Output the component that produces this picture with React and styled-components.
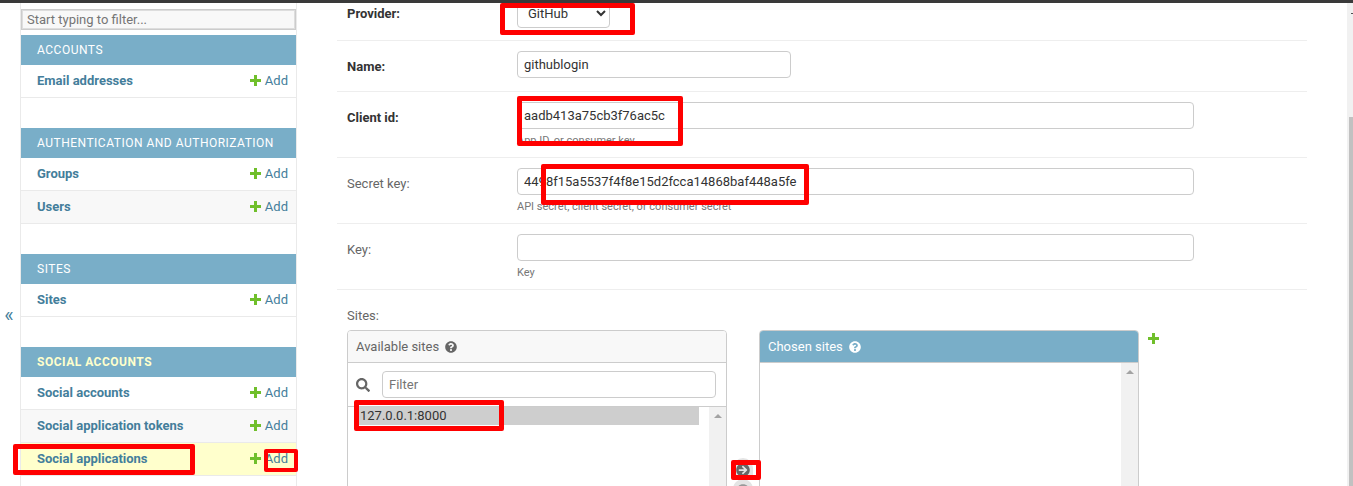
import React from "react";
import styled, { createGlobalStyle } from "styled-components";
import { FaArrowCircleRight, FaQuestionCircle, FaSearch } from "react-icons/fa";

const GlobalStyle = createGlobalStyle`
  html, body {
    margin: 0;
    padding: 0;
    background: #fff;
    overflow: hidden;
  }
  * {
    box-sizing: border-box;
  }
`;

const Page = styled.div`
  position: relative;
  width: 1353px;
  height: 486px;
  overflow: hidden;
  font-family: Roboto, "Liberation Sans", sans-serif;
  font-size: 13px;
  color: #333;
  border-top: 3px solid #3a3a3a;
  display: flex;
`;

const Toggle = styled.div`
  width: 20px;
  flex: none;
  padding: 300px 2px 0 0;
  text-align: center;
  font-size: 20px;
  line-height: 24px;
  color: #447e9b;
`;

const Sidebar = styled.nav`
  width: 277px;
  flex: none;
  padding-top: 6px;
  border-left: 1px solid #eaeaea;
  border-right: 1px solid #eaeaea;
`;

const NavFilter = styled.input`
  display: block;
  width: 100%;
  height: 21px;
  margin-bottom: 5px;
  padding: 0 5px;
  border: 1px solid #ccc;
  box-shadow: inset 0 0 0 1px #ddd;
  background: #f8f8f8;
  font: 13px Roboto, sans-serif;
  &::placeholder {
    color: #757575;
    opacity: 1;
  }
`;

const Group = styled.section`
  margin-bottom: 30px;
`;

const Caption = styled.div`
  height: 30px;
  padding-left: 16px;
  background: #79aec8;
  color: ${(p) => (p.$current ? "#ffc" : "#fff")};
  font-size: 12px;
  font-weight: ${(p) => (p.$current ? 700 : 400)};
  line-height: 30px;
  letter-spacing: 0.5px;
  text-transform: uppercase;
`;

const ModelRow = styled.div`
  height: 33px;
  padding: 0 8px 2px 16px;
  display: flex;
  align-items: center;
  justify-content: space-between;
  border-bottom: 1px solid #eaeaea;
  background: ${(p) => p.$bg || "#fff"};
  color: #447e9b;
`;

const ModelName = styled.span`
  font-weight: 700;
`;

const AddLink = styled.span`
  display: flex;
  align-items: center;
  gap: 4px;
`;

const PlusIcon = styled.svg`
  width: 11px;
  height: 11px;
  fill: #70bf2b;
`;

const Main = styled.main`
  flex: 1;
  padding-left: 40px;
  overflow: hidden;
`;

const Form = styled.div`
  width: 970px;
  margin-top: -15px;
`;

const FormRow = styled.div`
  padding: 10px 10px 13px;
  border-bottom: 1px solid #eee;
  display: flex;
`;

const SitesRow = styled.div`
  padding: 10px 10px 0;
`;

const Label = styled.label`
  display: block;
  width: 170px;
  flex: none;
  padding-top: 8px;
  line-height: 16px;
  color: ${(p) => (p.$required ? "#333" : "#666")};
  font-weight: ${(p) => (p.$required ? 700 : 400)};
`;

const Select = styled.select`
  display: block;
  width: 93px;
  height: 30px;
  margin-bottom: -1px;
  padding: 0 6px;
  border: 1px solid #ccc;
  border-radius: 4px;
  background: #fff;
  color: #333;
  font: 13px Roboto, sans-serif;
`;

const TextInput = styled.input`
  display: block;
  width: ${(p) => p.$width}px;
  height: 27px;
  padding: 0 6px;
  border: 1px solid #ccc;
  border-radius: 4px;
  background: #fff;
  color: #333;
  font: 13px Roboto, sans-serif;
`;

const Help = styled.div`
  margin: 5px 0 -3px;
  font-size: 11px;
  line-height: 13px;
  color: #777;
`;

const SelectorWrap = styled.div`
  display: flex;
  align-items: flex-start;
  margin-top: 6px;
`;

const Box = styled.div`
  width: 380px;
  height: 300px;
  flex: none;
  border: 1px solid #ccc;
  border-radius: 4px 4px 0 0;
  overflow: hidden;
`;

const BoxTitle = styled.div`
  height: 32px;
  padding-left: 8px;
  display: flex;
  align-items: center;
  gap: 6px;
  border-bottom: 1px solid #ccc;
  background: ${(p) => (p.$chosen ? "#79aec8" : "#f8f8f8")};
  color: ${(p) => (p.$chosen ? "#fff" : "#666")};
  svg {
    width: 12px;
    height: 12px;
  }
`;

const FilterRow = styled.div`
  height: 44px;
  padding: 8px 10px 0 8px;
  display: flex;
  gap: 12px;
  border-bottom: 1px solid #ccc;
  color: #666;
  svg {
    width: 14px;
    height: 14px;
    margin-top: 7px;
    flex: none;
  }
`;

const FilterInput = styled.input`
  flex: 1;
  min-width: 0;
  height: 27px;
  padding: 0 6px;
  border: 1px solid #ccc;
  border-radius: 4px;
  font: 13px Roboto, sans-serif;
  &::placeholder {
    color: #757575;
    opacity: 1;
  }
`;

const ListArea = styled.div`
  display: flex;
  height: 100%;
`;

const Options = styled.div`
  flex: 1;
  padding: 0 10px 0 8px;
`;

const Option = styled.div`
  height: 18px;
  padding-left: 4px;
  background: #cecece;
  line-height: 17px;
  color: #333;
`;

const ListTrack = styled.div`
  width: 17px;
  flex: none;
  padding-top: 7px;
  background: #f1f1f1;
  display: flex;
  justify-content: center;
  align-items: flex-start;
`;

const ArrowUp = styled.div`
  width: 0;
  height: 0;
  border-left: 4px solid transparent;
  border-right: 4px solid transparent;
  border-bottom: 4px solid #a3a3a3;
`;

const Chooser = styled.div`
  width: 32px;
  flex: none;
  padding: 128px 6px 0;
  display: flex;
  flex-direction: column;
`;

const ChooserButton = styled.div`
  width: 20px;
  height: 21px;
  border-radius: 10px 10px 0 0;
  background: #e4e4e4;
  padding: 5px 0 0 3px;
  line-height: 0;
  color: ${(p) => (p.$off ? "#999" : "#666")};
  svg {
    width: 14px;
    height: 14px;
  }
`;

const RelatedPlus = styled.div`
  padding: 3px 0 0 9px;
  line-height: 0;
`;

const PageScroll = styled.div`
  width: 6px;
  flex: none;
  padding: 114px 0 0 2px;
  background: #f1f1f1;
  position: relative;
  &::before {
    content: "";
    position: absolute;
    left: 4px;
    top: 10px;
    width: 2px;
    height: 1px;
    background: #505050;
  }
`;

const ScrollThumb = styled.div`
  height: 100%;
  background: #c1c1c1;
`;

const RedBox = styled.div`
  position: absolute;
  left: ${(p) => p.$x}px;
  top: ${(p) => p.$y - 3}px;
  width: ${(p) => p.$w}px;
  height: ${(p) => p.$h}px;
  border: ${(p) => p.$t || 5}px solid #f00;
  border-radius: 2px;
`;

const Plus = () => (
  <PlusIcon viewBox="0 0 11 11">
    <path d="M4 0h3v4h4v3H7v4H4V7H0V4h4z" />
  </PlusIcon>
);

const groups = [
  { title: "Accounts", rows: ["Email addresses"] },
  { title: "Authentication and Authorization", rows: ["Groups", "Users"] },
  { title: "Sites", rows: ["Sites"] },
  {
    title: "Social accounts",
    current: true,
    rows: ["Social accounts", "Social application tokens", "Social applications"],
  },
];

const rowBg = (group, index) => {
  if (group.current && index === 2) return "#ffc";
  return index % 2 === 1 ? "#f8f8f8" : "#fff";
};

const redBoxes = [
  { x: 500, y: 3, w: 135, h: 32 },
  { x: 517, y: 96, w: 166, h: 50 },
  { x: 541, y: 164, w: 268, h: 41 },
  { x: 354, y: 400, w: 150, h: 31 },
  { x: 731, y: 460, w: 30, h: 20 },
  { x: 13, y: 444, w: 182, h: 31 },
  { x: 264, y: 449, w: 34, h: 23, t: 4 },
];

export default function App() {
  return (
    <Page>
      <GlobalStyle />
      <Toggle>«</Toggle>
      <Sidebar>
        <NavFilter placeholder="Start typing to filter..." />
        {groups.map((group) => (
          <Group key={group.title}>
            <Caption $current={group.current}>{group.title}</Caption>
            {group.rows.map((name, i) => (
              <ModelRow key={name} $bg={rowBg(group, i)}>
                <ModelName>{name}</ModelName>
                <AddLink>
                  <Plus />
                  Add
                </AddLink>
              </ModelRow>
            ))}
          </Group>
        ))}
      </Sidebar>
      <Main>
        <Form>
          <FormRow>
            <Label $required>Provider:</Label>
            <Select defaultValue="github">
              <option value="github">GitHub</option>
            </Select>
          </FormRow>
          <FormRow>
            <Label $required>Name:</Label>
            <TextInput $width={274} defaultValue="githublogin" />
          </FormRow>
          <FormRow>
            <Label $required>Client id:</Label>
            <div>
              <TextInput $width={677} defaultValue="aadb413a75cb3f76ac5c" />
              <Help>App ID, or consumer key</Help>
            </div>
          </FormRow>
          <FormRow>
            <Label>Secret key:</Label>
            <div>
              <TextInput $width={677} defaultValue="4498f15a5537f4f8e15d2fcca14868baf448a5fe" />
              <Help>API secret, client secret, or consumer secret</Help>
            </div>
          </FormRow>
          <FormRow>
            <Label>Key:</Label>
            <div>
              <TextInput $width={677} />
              <Help>Key</Help>
            </div>
          </FormRow>
          <SitesRow>
            <Label>Sites:</Label>
            <SelectorWrap>
              <Box>
                <BoxTitle>
                  Available sites
                  <FaQuestionCircle />
                </BoxTitle>
                <FilterRow>
                  <FaSearch />
                  <FilterInput placeholder="Filter" />
                </FilterRow>
                <ListArea>
                  <Options>
                    <Option>127.0.0.1:8000</Option>
                  </Options>
                  <ListTrack>
                    <ArrowUp />
                  </ListTrack>
                </ListArea>
              </Box>
              <Chooser>
                <ChooserButton>
                  <FaArrowCircleRight />
                </ChooserButton>
                <ChooserButton $off>
                  <FaArrowCircleRight />
                </ChooserButton>
              </Chooser>
              <Box>
                <BoxTitle $chosen>
                  Chosen sites
                  <FaQuestionCircle />
                </BoxTitle>
                <ListArea>
                  <Options />
                  <ListTrack>
                    <ArrowUp />
                  </ListTrack>
                </ListArea>
              </Box>
              <RelatedPlus>
                <Plus />
              </RelatedPlus>
            </SelectorWrap>
          </SitesRow>
        </Form>
      </Main>
      <PageScroll>
        <ScrollThumb />
      </PageScroll>
      {redBoxes.map((box) => (
        <RedBox key={`${box.x}-${box.y}`} $x={box.x} $y={box.y} $w={box.w} $h={box.h} $t={box.t} />
      ))}
    </Page>
  );
}
